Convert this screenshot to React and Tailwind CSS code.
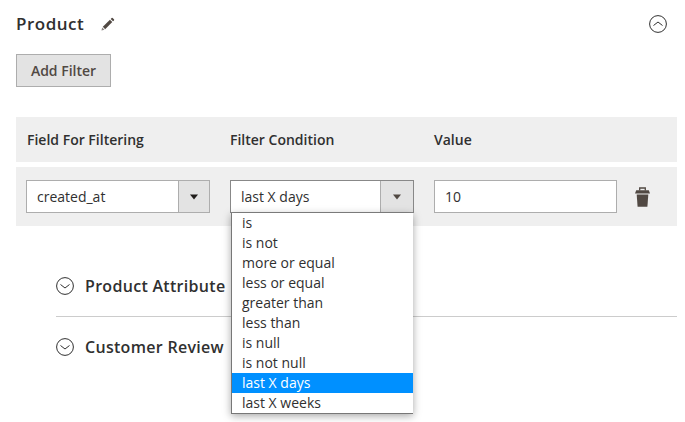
import React from "react";

const conditions = [
  "is",
  "is not",
  "more or equal",
  "less or equal",
  "greater than",
  "less than",
  "is null",
  "is not null",
  "last X days",
  "last X weeks",
];

function Caret({dim}) {
  return (
    <svg width="10" height="6" viewBox="0 0 10 6">
      <path d="M1 0.5h8L5 5.5z" fill={dim ? "#514943" : "#1f1c1a"} />
    </svg>
  );
}

function Chevron({up}) {
  return (
    <svg width="18" height="18" viewBox="0 0 18 18" fill="none" stroke="#303030">
      <circle cx="9" cy="9" r="8.4" strokeWidth="1" />
      <path d={up ? "M4.5 10.5 9 7l4.5 3.5" : "M4.5 7.5 9 11l4.5-3.5"} strokeWidth="1" />
    </svg>
  );
}

function FakeSelect({value, open}) {
  return (
    <div
      className={`flex h-[33px] w-[184px] border bg-white ${
        open ? "border-[#888888]" : "border-[#adadad]"
      }`}
    >
      <div className="flex flex-1 items-center pl-[10px] text-sm text-[#303030]">
        {value}
      </div>
      <div
        className={`flex items-center justify-center border-l border-[#adadad] bg-[#e3e3e3] ${
          open ? "w-[33px]" : "w-[31px]"
        }`}
      >
        <Caret dim={open} />
      </div>
    </div>
  );
}

function Section({title, line}) {
  return (
    <div
      className={`flex items-center gap-[11px] ${
        line ? "h-[61px] border-b border-[#cccccc]" : "h-[60px]"
      }`}
    >
      <Chevron />
      <span className="text-base font-[540] tracking-[0.3px] text-[#303030]">
        {title}
      </span>
    </div>
  );
}

export default function App() {
  return (
    <div
      className="h-[422px] w-[685px] overflow-hidden bg-white pl-4 pr-2 pt-3"
      style={{fontFamily: '"Open Sans", sans-serif'}}
    >
      <div className="flex h-[24px] items-center justify-between pr-[10px]">
        <div className="flex items-center gap-4">
          <span className="text-[17px] font-[540] tracking-[0.5px] text-[#303030]">
            Product
          </span>
          <svg width="15" height="15" viewBox="0 0 16 16">
            <path d="M1.5 14.5l.8-3.3 2.5 2.5z" fill="#8a8481" />
            <path d="M3 10.5l7.6-7.6 2.5 2.5-7.6 7.6z" fill="#514943" />
            <path d="M11.4 2.1l1-1a.8.8 0 0 1 1.1 0l1.4 1.4a.8.8 0 0 1 0 1.1l-1 1z" fill="#514943" />
          </svg>
        </div>
        <Chevron up />
      </div>

      <button className="mt-[18px] block h-[33px] w-[95px] border border-[#adadad] bg-[#e3e3e3] text-sm font-[540] text-[#514943]">
        Add Filter
      </button>

      <div className="mt-[30px] flex h-[45px] items-center gap-5 bg-[#efefef] pl-[10px] text-sm font-[540] text-[#303030]">
        <div className="ml-px w-[183px]">Field For Filtering</div>
        <div className="w-[183px]">Filter Condition</div>
        <div className="ml-px">Value</div>
      </div>

      <div className="mt-[5px] flex h-[59px] items-center gap-5 bg-[#efefef] pl-[10px]">
        <FakeSelect value="created_at" />
        <div className="relative">
          <FakeSelect value="last X days" open />
          <ul className="absolute left-px top-[33px] z-10 w-[182px] border-b border-l border-[#777777] bg-white shadow-[0_2px_8px_rgba(0,0,0,0.35)]">
            {conditions.map((item) => (
              <li
                key={item}
                className={`flex h-5 items-center pl-[10px] text-sm ${
                  item === "last X days"
                    ? "bg-[#0090ff] text-white"
                    : "text-[#303030]"
                }`}
              >
                {item}
              </li>
            ))}
          </ul>
        </div>
        <div className="flex h-[33px] w-[183px] items-center border border-[#adadad] bg-white pl-[10px] text-sm text-[#303030]">
          10
        </div>
        <svg className="ml-[-2px]" width="15" height="20" viewBox="0 0 15 20">
          <path d="M4.7 3.5V1h5.6v2.5" fill="none" stroke="#514943" strokeWidth="1.3" />
          <path d="M1.2 3.2h12.6L15 6.6H0z" fill="#514943" />
          <path d="M1.7 7.4h11.6l-0.9 12.3H2.6z" fill="#514943" />
        </svg>
      </div>

      <div className="ml-10 mt-[30px]">
        <Section title="Product Attribute" line />
        <Section title="Customer Review" />
      </div>
    </div>
  );
}
